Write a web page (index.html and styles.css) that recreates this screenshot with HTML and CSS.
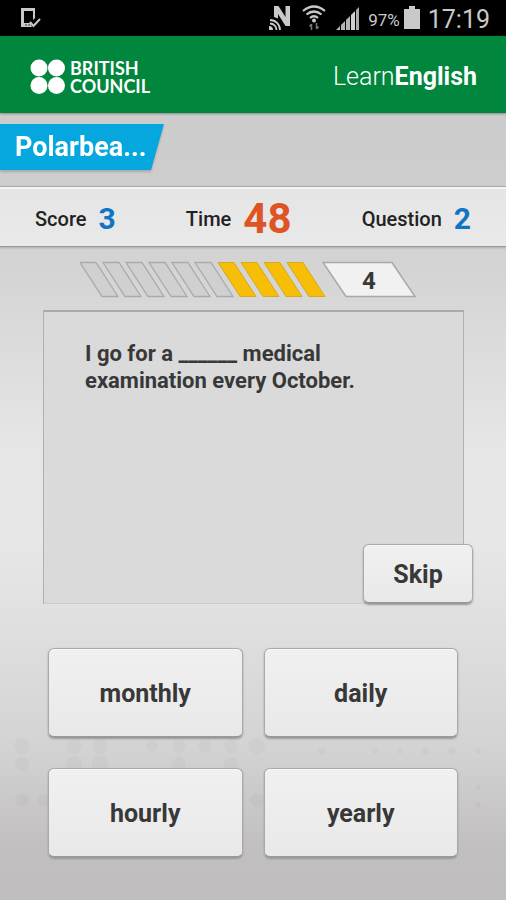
FILE: index.html
```html
<!DOCTYPE html>
<html lang="en">
<head>
<meta charset="utf-8">
<meta name="viewport" content="width=device-width, initial-scale=1">
<title>LearnEnglish quiz</title>
<link rel="stylesheet" href="styles.css">
</head>
<body>
<div class="status">
  <svg class="status-device" width="22" height="22" viewBox="0 0 22 22">
    <path d="M2 1h13v10l-2 2V4H4v12h6l2 4H1V1z" fill="#c9c9c9"/>
    <path d="M10 15l3.500 4L20 12" fill="none" stroke="#c9c9c9" stroke-width="2"/>
    <path d="M5 18h2M8 18h2" stroke="#333" stroke-width="1"/>
  </svg>
  <div class="status-right">
    <svg width="23" height="26" viewBox="0 0 23 26">
      <path d="M5 12V1h4.500l7 11V1H21v20h-4.500L9 9v4.500z" fill="#c9c9c9"/>
      <g fill="none" stroke="#c9c9c9" stroke-width="1.800"><path d="M1 15a10 10 0 0 1 10 10M1 18.500a6.500 6.500 0 0 1 6.500 6.500"/></g>
      <path d="M0 25v-4a4 4 0 0 1 4 4z" fill="#c9c9c9"/>
    </svg>
    <svg width="24" height="26" viewBox="0 0 24 26">
      <g fill="none" stroke="#c9c9c9" stroke-width="2.200"><path d="M1 6q11-9 22 0M4.500 9.500q7.500-6 15 0M8 13q4-3.500 8 0"/></g>
      <circle cx="12" cy="15.500" r="2" fill="#c9c9c9"/>
      <path d="M9.500 25v-6m-2 2.500l2-2.500M14.500 18v6m2-2.500l-2 2.500" fill="none" stroke="#777" stroke-width="1.500"/>
    </svg>
    <svg width="24" height="26" viewBox="0 0 24 26">
      <path d="M0 25l4-4v4zM5 20l4-4v9H5zM10 15l4-4v14h-4z" fill="#b4b4b4"/>
      <path d="M15 10l4-4v19h-4z" fill="#d0d0d0"/><path d="M20 5l3-3v23h-3z" fill="#aaa"/>
    </svg>
    <span class="battery-text">97%</span>
    <svg width="16" height="26" viewBox="0 0 16 26"><path d="M0 4h5V1h6v3h5v20H0z" fill="#c9c9c9"/></svg>
    <span class="clock">17:19</span>
  </div>
</div>

<header class="header">
  <div class="council">
    <svg width="36" height="36" viewBox="0 0 36 36" fill="#fff">
      <circle cx="9" cy="9" r="8.500"/><circle cx="26.500" cy="9" r="8.500"/>
      <circle cx="9" cy="26.500" r="8.500"/><circle cx="26.500" cy="26.500" r="8.500"/>
    </svg>
    <span class="council-name">BRITISH<br>COUNCIL</span>
  </div>
  <span class="product">Learn<b>English</b></span>
</header>

<div class="player">
  <div class="ribbon">
    <svg class="ribbon-shape" viewBox="0 0 164 46" preserveAspectRatio="none"><path d="M0 0h164l-13 46H0z" fill="#06a7df"/></svg>
    <span class="ribbon-name">Polarbea...</span>
  </div>
</div>

<div class="scores">
  <div class="stat"><span>Score</span><b>3</b></div>
  <div class="stat stat-time"><span>Time</span><b>48</b></div>
  <div class="stat"><span>Question</span><b>2</b></div>
</div>

<main class="main">
  <svg class="dots" width="506" height="180" viewBox="0 0 506 180" aria-hidden="true">
    <g fill="#000" opacity=".018">
      <circle cx="22" cy="26" r="8"/><circle cx="74" cy="26" r="8"/><circle cx="100" cy="26" r="8"/><circle cx="152" cy="25" r="6"/>
      <circle cx="179" cy="26" r="7"/><circle cx="205" cy="26" r="7"/><circle cx="231" cy="26" r="7"/><circle cx="257" cy="26" r="8"/>
      <circle cx="22" cy="44" r="7"/><circle cx="74" cy="44" r="8"/><circle cx="100" cy="44" r="8"/><circle cx="179" cy="44" r="7"/><circle cx="231" cy="44" r="7"/>
      <circle cx="22" cy="80" r="7"/><circle cx="44" cy="80" r="6"/><circle cx="257" cy="80" r="7"/>
      <circle cx="322" cy="31" r="4"/><circle cx="375" cy="31" r="3"/><circle cx="400" cy="31" r="3"/><circle cx="425" cy="31" r="4"/>
      <circle cx="452" cy="31" r="4"/><circle cx="478" cy="31" r="3"/><circle cx="478" cy="67" r="3"/><circle cx="478" cy="85" r="3"/>
    </g>
  </svg>
  <div class="progress">
    <svg width="246" height="37" viewBox="0 0 246 37">
      <g fill="#d0d0d0" stroke="#aaa" stroke-width="1.300">
        <path d="M0 1.500h16l22 34H22z"/><path d="M23 1.500h16l22 34H45z"/><path d="M46 1.500h16l22 34H68z"/>
        <path d="M69 1.500h16l22 34H91z"/><path d="M92 1.500h16l22 34h-16z"/><path d="M115 1.500h16l22 34h-16z"/>
      </g>
      <g fill="#f6be06" stroke="#d7a91c" stroke-width="1">
        <path d="M138 1.500h16l22 34h-16z"/><path d="M161 1.500h16l22 34h-16z"/>
        <path d="M184 1.500h16l22 34h-16z"/><path d="M207 1.500h16l22 34h-16z"/>
      </g>
    </svg>
    <div class="streak">
      <svg class="streak-shape" viewBox="0 0 94 37"><path d="M1 1.500h69l23 34H24z" fill="#f1f1f1" stroke="#a8a8a8" stroke-width="1.500"/></svg>
      <span class="streak-value">4</span>
    </div>
  </div>

  <section class="question">
    <p>I go for a ______ medical examination every October.</p>
    <button class="key skip" type="button">Skip</button>
  </section>

  <div class="answers">
    <button class="key" type="button">monthly</button>
    <button class="key" type="button">daily</button>
    <button class="key" type="button">hourly</button>
    <button class="key" type="button">yearly</button>
  </div>
</main>
</body>
</html>
```
FILE: styles.css
```css
* { box-sizing: border-box; }

body {
  margin: 0;
  min-height: 100vh;
  font-family: Roboto, "Liberation Sans", sans-serif;
  color: #383838;
  background: linear-gradient(#cbcbcb 0%, #cdcdcd 20%, #d4d4d4 30%, #e6e6e6 50%, #e7e7e7 60%, #dfdfdf 70%, #d4d3d3 83%, #c1bfc0 94%, #bfbdbe 100%);
}

svg { display: block; flex: none; }

.status {
  display: flex;
  align-items: center;
  justify-content: space-between;
  height: 36px;
  padding: 0 16px 0 20px;
  background: #000;
  color: #c9c9c9;
}

.status-right { display: flex; align-items: center; gap: 8px; }
.status-right svg + svg { margin-left: 2px; }
.battery-text { font-size: 17px; line-height: 36px; padding-top: 3px; margin-right: -4px; }
.clock { font-size: 25px; line-height: 36px; padding-top: 3px; }

.header {
  display: flex;
  align-items: center;
  justify-content: space-between;
  height: 77px;
  padding: 4px 29px 0 30px;
  background: #00863d;
  color: #fff;
  box-shadow: 0 1px 2px #888;
}

.council { display: flex; align-items: center; gap: 4px; }
.council-name { font: 700 18px/18px Lato, sans-serif; }
.product { font: 300 25px/32px Roboto, sans-serif; }
.product b { font-weight: 700; }

.player { padding-top: 11px; height: 73px; }

.ribbon {
  position: relative;
  width: 164px;
  height: 46px;
  filter: drop-shadow(0 2px 1px #aaa);
}

.ribbon-shape { position: absolute; inset: 0; width: 100%; height: 100%; }

.ribbon-name {
  position: relative;
  display: block;
  padding-left: 15px;
  font-size: 27px;
  font-weight: 700;
  line-height: 46px;
  color: #fff;
}

.scores {
  display: flex;
  align-items: center;
  justify-content: space-between;
  height: 61px;
  padding: 4px 35px 0;
  background: linear-gradient(#e5e5e5, #e9e9e9);
  border-top: 1px solid #aaa;
  border-bottom: 1px solid #999;
  box-shadow: 0 1px 2px #aaa, inset 0 2px #f5f5f5;
}

.stat { display: flex; align-items: center; gap: 12px; font-size: 20px; font-weight: 500; color: #222; }
.stat b { font-size: 30px; line-height: 40px; font-weight: 700; color: #1074c4; }
.stat-time b { font-size: 42px; color: #df5424; }

.main { position: relative; z-index: 0; padding: 14px 42px 42px 43px; }

.dots { position: absolute; left: 0; bottom: 0; z-index: -1; }

.progress { display: flex; justify-content: center; padding-right: 11px; }

.streak { position: relative; width: 94px; height: 37px; margin-left: -4px; }
.streak-shape { position: absolute; inset: 0; }
.streak-value {
  position: relative;
  display: block;
  text-align: center;
  font-size: 24px;
  font-weight: 700;
  line-height: 40px;
}

.question {
  position: relative;
  min-height: 294px;
  margin-top: 12px;
  padding: 28px 80px 80px 41px;
  background: #dadada;
  border: 1px solid #b0b0b0;
  border-top: 2px solid #aaa;
  border-bottom-color: #ccc;
}

.question p { margin: 0; font-size: 22px; font-weight: 700; line-height: 27px; }

.key {
  padding: 2px 8px 0;
  border: 1px solid #aaa;
  border-bottom: 2px solid #999;
  border-radius: 6px;
  background: linear-gradient(#f0f0f0, #e9e9e9);
  box-shadow: 0 1px 2px #999, inset 0 1px #f8f8f8;
  color: #383838;
  font: 700 25px/32px Roboto, "Liberation Sans", sans-serif;
}

.skip { position: absolute; right: -10px; bottom: -1px; width: 110px; height: 60px; }

.answers {
  display: grid;
  grid-template-columns: 1fr 1fr;
  grid-auto-rows: 90px;
  gap: 30px 21px;
  margin-top: 44px;
  padding: 0 6px 0 5px;
}
```
